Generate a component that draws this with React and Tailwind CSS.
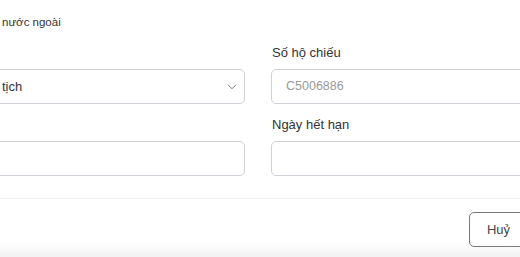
import React from "react"
import { ChevronDown } from "lucide-react"

const font = { fontFamily: '"Liberation Sans", Arial, sans-serif' }

const App = () => {
    return (
        <div className="w-[520px] h-[257px] overflow-hidden bg-white relative text-[#333]" style={font}>
            <div className="pt-[15px] pl-[2px] h-[30px] text-[11.5px] leading-[14px] text-[#333]">nước ngoài</div>

            <div className="ml-[-115px] mt-[15px] grid grid-cols-[360px_360px] gap-x-[26px] gap-y-[13px]">
                <div>
                    <div className="h-[16px] mb-[8px]"></div>
                    <div className="relative h-[35px] border border-[#d0d0d8] rounded-[5px] flex items-center pl-[116px] text-[13px] text-[#333]">
                        tịch
                        <ChevronDown className="absolute right-[5px] top-[10px] text-[#666]" size={14} strokeWidth={1.5} />
                    </div>
                </div>
                <div>
                    <div className="h-[16px] mb-[8px] text-[13px] leading-[16px] pl-[1px]">Số hộ chiếu</div>
                    <div className="h-[35px] border border-[#d0d0d8] rounded-[5px] flex items-center pl-[14px] text-[12.5px] text-[#9a9a9a]">
                        C5006886
                    </div>
                </div>
                <div>
                    <div className="h-[16px] mb-[8px]"></div>
                    <div className="h-[35px] border border-[#d0d0d8] rounded-[5px]"></div>
                </div>
                <div>
                    <div className="h-[16px] mb-[8px] text-[13px] leading-[16px] pl-[1px]">Ngày hết hạn</div>
                    <div className="h-[35px] border border-[#d0d0d8] rounded-[5px]"></div>
                </div>
            </div>

            <div className="mt-[22px] border-t border-[#eeeeee] h-[59px] bg-gradient-to-b from-white from-[75%] to-[#f2f2f2] flex justify-end pt-[13px] pr-0">
                <div className="ml-auto mr-[-8px] h-[35px] w-[59px] border border-[#7a7a7a] rounded-[5px] flex items-center justify-center text-[13px] text-[#444]">
                    Huỷ
                </div>
            </div>
        </div>
    );
};

export default App;
